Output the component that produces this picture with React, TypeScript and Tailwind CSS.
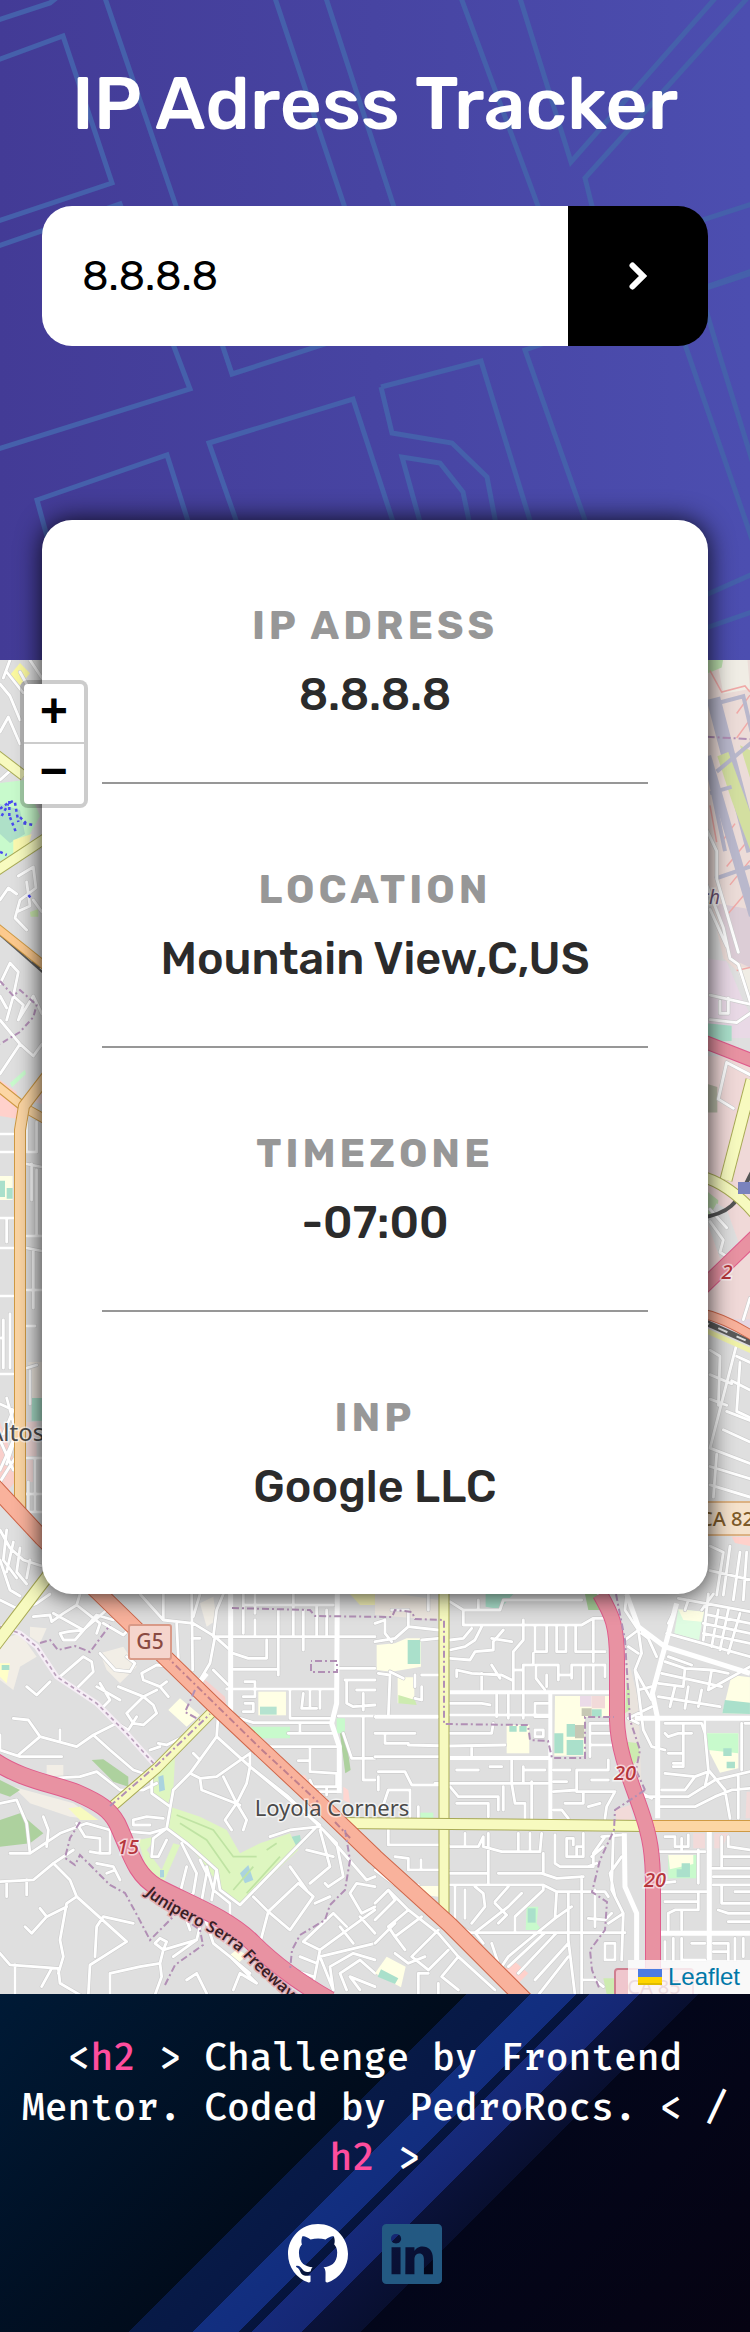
import { useState } from "react";
import { BsGithub, BsLinkedin } from "react-icons/bs";

const patternLines = [
  "M-5 21 L50 3 L60 -5",
  "M-5 61 L63 36 L112 183 L-5 222",
  "M-5 247 L120 204 L190 389 L-5 450",
  "M104 -5 L176 206 L232 374 L384 325 L274 -5",
  "M325 -5 L420 287 L500 262",
  "M460 -5 L538 206 L556 262",
  "M519 -5 L571 162 L718 -5",
  "M750 -5 L585 178 L592 206 L610 250 L755 203",
  "M755 270 L525 350 L592 540",
  "M755 272 L700 290 L721 360 L755 470",
  "M680 330 L755 548",
  "M381 387 L481 361 L536 540",
  "M381 387 L392 433 L452 443 L487 477 L499 540",
  "M425 540 L402 457 L440 463 L463 492 L473 540",
  "M243 540 L209 443 L353 399 L399 540",
  "M48 540 L37 500 L167 455 L194 540",
  "M755 573 L690 602",
  "M755 611 L700 630",
];

function HeaderPattern() {
  return (
    <svg
      aria-hidden="true"
      className="absolute inset-0 h-full w-full"
      viewBox="0 0 750 660"
      preserveAspectRatio="xMidYMin slice"
      fill="none"
      stroke="#4560ab"
      strokeWidth="5"
    >
      {patternLines.map((d) => (
        <path key={d} d={d} />
      ))}
    </svg>
  );
}

type Road = { d: string; w: number; fill: string; edge: string };

const mainRoads: Road[] = [
  { d: "M-10 1652 L37 1590 L60 1560", w: 11, fill: "#f7fabf", edge: "#a8aa55" },
  { d: "M107 1811 L157 1768 L213 1711", w: 9, fill: "#f7fabf", edge: "#a8aa55" },
  { d: "M444 1580 V1924", w: 9, fill: "#f7fabf", edge: "#a8aa55" },
  { d: "M340 1823 L450 1824 L645 1826", w: 10, fill: "#f7fabf", edge: "#a8aa55" },
  { d: "M645 1826 H760", w: 10, fill: "#fcd6a4", edge: "#cf9a44" },
  { d: "M-10 750 L24 776", w: 9, fill: "#f7fabf", edge: "#a8aa55" },
  { d: "M-10 875 L46 838", w: 9, fill: "#f7fabf", edge: "#a8aa55" },
  { d: "M752 1080 L726 1180", w: 11, fill: "#f7fabf", edge: "#a8aa55" },
  { d: "M700 1176 Q730 1184 756 1215", w: 10, fill: "#f7fabf", edge: "#a8aa55" },
  { d: "M-10 922 L50 970", w: 7, fill: "#fcc98d", edge: "#cf9a44" },
  { d: "M-10 1080 L25 1108 L50 1122", w: 8, fill: "#fcd6a4", edge: "#cf9a44" },
  { d: "M50 1072 L24 1106 L20 1130 V1510", w: 10, fill: "#fcd6a4", edge: "#cf9a44" },
  { d: "M-10 1482 L42 1538 L100 1594 L213 1704 L323 1807 L375 1857 L450 1925 L530 2005", w: 15, fill: "#f9b29c", edge: "#cf6649" },
  { d: "M700 1313 Q725 1318 756 1338", w: 8, fill: "#f9b29c", edge: "#cf6649" },
  { d: "M-10 1758 C20 1780 55 1784 77 1793 C100 1803 110 1810 117 1823 C130 1850 134 1874 157 1887 C187 1903 227 1917 253 1943 C277 1967 300 1983 330 2000", w: 16, fill: "#e892a2", edge: "#e05c8c" },
  { d: "M600 1594 C612 1615 617 1625 617 1660 V1720 C618 1760 640 1800 647 1830 C654 1855 653 1880 653 1920 V2000", w: 14, fill: "#e892a2", edge: "#e05c8c" },
  { d: "M700 1040 L756 1062", w: 12, fill: "#e892a2", edge: "#e05c8c" },
  { d: "M700 1290 L756 1236", w: 13, fill: "#e892a2", edge: "#e05c8c" },
];

type Area = [string, string];

/* South-west sheet, drawn on a grid three times finer than the map. */
const swAreas: Area[] = [
  ["M0 150 L60 130 L110 200 L60 230 L40 300 L0 270 Z", "#f2eee6"],
  ["M300 190 L370 170 L410 230 L360 280 L320 240 Z", "#f2eee6"],
  ["M90 110 L140 115 L120 160 L90 140 Z", "#f2eee6"],
  ["M40 590 L220 640 L290 690 L210 680 L90 640 Z", "#f2eee6"],
  ["M140 525 H190 V560 H140 Z", "#f2eee6"],
  ["M600 40 L640 20 L650 90 L620 110 Z", "#f2eee6"],
  ["M275 510 L310 508 L385 560 V590 L340 575 Z", "#add19e"],
  ["M0 690 L60 670 L130 730 L90 760 L0 770 Z", "#add19e"],
  ["M0 570 L60 600 L30 620 L0 610 Z", "#add19e"],
  ["M455 560 L525 505 L520 600 L500 650 L455 600 Z", "#def6c0"],
  ["M510 650 L600 680 L680 720 L720 790 L780 760 L870 730 L895 780 L720 945 L670 910 L620 830 L560 760 L505 715 Z", "#def6c0"],
  ["M415 750 L475 738 L440 780 L485 840 L520 760 L540 765 L490 880 L440 840 Z", "#def6c0"],
  ["M720 410 H870 V445 H760 Z", "#c8facc"],
  ["M1010 385 H1035 V430 H1010 Z", "#c8facc"],
  ["M1020 430 H1036 L1052 540 L1036 550 Z", "#add19e"],
  ["M775 305 H858 V376 H775 Z", "#ffffe5"],
  ["M540 325 L600 375 L560 410 L505 360 Z", "#ffffe5"],
  ["M690 1095 L712 1078 L740 1095 L715 1120 Z", "#ffffe5"],
  ["M610 265 L675 320 L680 350 L620 300 Z", "#f7cfcb"],
  ["M890 560 L915 555 L930 585 L905 590 Z", "#ffd6d1"],
  ["M1030 590 L1045 600 L1050 640 L1030 630 Z", "#ffd6d1"],
  ["M205 655 L240 650 L295 690 L240 690 Z", "#f7fabf"],
  ["M780 350 H830 V374 H780 Z", "#b5e3d0"],
  ["M0 220 H30 L20 280 L0 260 Z", "#ffffc8"],
  ["M5 225 H28 V240 H5 Z", "#aae0cb"],
  ["M1050 12 H1125 V45 H1080 Z", "#f4f2b8"],
  ["M475 560 L490 555 L495 600 L478 605 Z", "#aad3df"],
  ["M720 850 L745 825 L760 870 L735 880 Z", "#aad3df"],
  ["M480 840 H492 V862 H480 Z", "#aad3df"],
  ["M875 740 L900 735 L905 765 L890 770 Z", "#aae0cb"],
];

const swRoads = [
  "M0 30 L60 60 L110 40 L150 12 M100 80 L150 75 L155 95 L190 70 L230 45 L240 12",
  "M160 70 L250 120 L205 125 L180 130 L190 150 L225 150 L290 75 L340 90",
  "M230 45 L300 100 L290 130 M250 120 L320 60 M310 100 L370 135 L385 120",
  "M180 260 L250 200 L275 215 L280 245 L235 290 M80 290 L110 315 L150 275",
  "M300 190 L345 240 L390 245 L405 220 L380 200 M430 270 L425 250 L470 225 L515 230",
  "M430 270 L480 290 L500 275 M480 290 L505 320 M355 290 L430 320 L380 370 L400 400 L430 405 L470 370 L460 345 L430 320 L470 300",
  "M300 280 L330 330 L310 350 M290 290 L360 330",
  "M420 12 L490 90 L580 100 L645 140 L630 220 L600 270 M490 12 V90 M530 100 L535 205 M575 12 L578 240 M600 12 L580 80",
  "M640 140 L650 60 L670 12 M576 145 H600 M645 140 H1125 M645 140 L690 180",
  "M730 12 V130 M765 12 V70 M765 90 V140 M800 150 V205 M835 60 V255 M880 12 V140 M910 60 V180 M950 50 V140 M980 60 V140 M700 238 H835 M745 205 H800 M700 190 L745 205 M730 45 H1000",
  "M680 297 H1010 M640 240 L685 285 M735 275 H765 V320 H730 M735 340 H760 V365 H730 M870 297 V385 H990 M905 355 H950 M930 300 V355 M960 300 V355 M910 310 L905 355",
  "M1015 235 H1125 M1035 270 H1125 M1040 270 V340 L1060 350 L1125 345 M1070 300 H1125 M1090 310 V360 M1015 378 H1125 M1090 378 V570 H1125 M1030 430 L1055 505 H1125",
  "M720 385 L760 398 H995 M865 430 H1005 M810 470 H1010 M930 475 V545 L1010 550 M895 512 H930 M900 400 V428",
  "M945 590 H1020 M960 605 H1020 M980 590 V615 M945 605 L930 570 M1010 550 V590",
  "M0 435 V480 L60 500 H185 M55 495 L120 440 L230 470 L280 435 L330 480 L400 540 L460 560 M40 385 L85 390 L120 440 M180 450 V420 M280 435 L350 400 L385 420 L410 380",
  "M150 565 L240 560 L290 545 L360 600 L430 600 M430 600 L470 580 M475 460 L500 465 L550 440 M450 480 L480 470",
  "M655 370 L650 440 L570 550 L520 600 L500 715 L450 730 L330 720 L260 700 L180 730 L90 790 L30 790",
  "M650 440 L750 530 L865 620 L960 710 L870 720 L810 740 M570 550 L600 565 L650 560 L750 490 V530 L740 580 L710 640 L740 690 L730 720",
  "M750 530 L960 705 M600 565 L605 600 L720 645 M670 560 L710 640 M710 640 L675 690 L695 720 M580 490 L600 510 M455 560 V610 L510 650",
  "M500 715 L560 760 L650 840 L660 900 L720 945 L950 710 M400 690 L440 680 L490 685 M400 690 V705 H450 M500 715 L460 745 L455 800 L475 800 L500 750",
  "M545 760 L590 850 L580 910 L550 930 M560 830 L540 910 M600 810 L620 850 L600 960 M620 830 L640 900 L690 940 L690 975 M650 840 L635 930",
  "M0 640 L50 630 L80 700 L90 790 M130 680 L145 720 L140 770 M230 700 L255 740 L300 745 V790 L270 785 M330 720 V790 H300 M290 820 L340 830 L360 870 M320 850 L345 840",
  "M0 875 L100 870 L160 820 L220 780 M20 880 V920 M80 870 V915 M160 820 L210 870 L230 920 L380 1055 L270 1125 L265 1215 M230 920 L200 940 L180 1050 L190 1100 L175 1150",
  "M120 955 L140 980 L95 1030 L75 1010 M140 980 L200 950 M310 980 L290 1010 L285 1100 M310 980 L400 1000 M0 1090 L30 1125 L175 1135 L180 1180 L240 1215 M155 1135 L125 1190 M45 1125 V1215",
  "M330 1215 V1150 L420 1130 L480 1120 L490 1080 L465 1060 L480 1045 L500 1055 L490 1080 L590 1050 L600 1010 M480 1120 L485 1160 L465 1215 M590 1050 L520 1100",
  "M610 970 L640 1060 L690 1100 L770 1180 L720 1150 L700 1200 M540 930 L570 1020 M560 1170 L590 1150 L620 1210 M690 1100 L750 1150",
  "M760 920 L805 965 L780 1060 M805 965 L870 1020 L940 920 L895 880 L805 965 M960 710 L1010 760 L1030 860 L985 890 L975 880 M960 720 L990 830 L930 880 M920 780 L1000 800 M870 830 L920 900 M945 940 L990 920",
  "M970 720 L1100 870 L1125 860 M1050 910 L1070 880 L1125 890 M1050 910 L1085 970 L1125 950 M910 1055 L960 1080 L1125 960 M910 1055 L1000 970 L1040 1010 M960 1080 L940 1180 M1000 1200 L960 1100 L1125 1060",
  "M1000 1200 L990 1130 L1060 1090 L1125 1110 M1040 1200 L1020 1150 L1080 1110 L1125 1150 M1080 1200 L1050 1160 L1125 1190 M1020 1010 L1060 1060 M1080 980 L1125 1030 M880 1140 L940 1160 M900 1100 L950 1120",
];

/* Unpaved lane that crosses the south-west sheet. */
const lane = "M0 110 L60 130 L110 170 L170 260 L290 340 L380 430 L465 525";

const seAreas: Area[] = [
  ["M0 12 L70 12 L190 30 L190 90 L0 75 Z", "#eee8e0"],
  ["M5 165 L60 160 L95 145 H138 V230 L50 245 L5 240 Z", "#ffffe5"],
  ["M98 150 H136 V222 H98 Z", "#aae0cb"],
  ["M68 262 H118 V325 L68 340 Z", "#ffffe5"],
  ["M70 315 L120 330 L125 345 L70 340 Z", "#cdebb0"],
  ["M332 12 H415 L375 58 L332 50 Z", "#aae0cb"],
  ["M630 12 H665 L690 60 H640 Z", "#a9cf9a"],
  ["M540 318 H705 V380 H630 V497 H538 Z", "#ffffe5"],
  ["M615 318 H650 V350 H615 Z", "#ebdbe8"],
  ["M650 318 H690 V355 H650 Z", "#f2dad9"],
  ["M538 430 H565 V490 H538 Z M575 402 H600 V440 H575 Z M575 450 H625 V495 H575 Z M650 358 H680 V380 H650 Z", "#aae0cb"],
  ["M600 405 H628 V445 H600 Z M620 355 H650 V378 H620 Z", "#c6c7b4"],
  ["M395 405 H463 V490 H395 Z", "#ffffe5"],
  ["M403 408 H425 V425 H403 Z M433 408 H455 V425 H433 Z", "#aae0cb"],
  ["M910 58 L987 65 L972 150 L898 130 Z", "#dffce2"],
  ["M910 58 L987 65 L980 95 L925 90 Z", "#ffffe5"],
  ["M1070 255 L1125 262 V372 L1042 370 Z", "#ffffe5"],
  ["M1050 330 L1125 338 V372 L1042 370 Z", "#aae0cb"],
  ["M995 430 H1090 V535 L1035 548 L1005 490 Z", "#ffffe5"],
  ["M995 430 H1090 V490 L1000 480 Z", "#c8facc"],
  ["M1045 475 H1070 V498 H1045 Z M1055 515 H1080 V535 H1055 Z", "#aae0cb"],
  ["M750 170 L790 330 L800 600 L830 690 L790 690 L740 500 Z", "#e9e3dd"],
  ["M755 455 L790 460 L795 500 L770 530 Z", "#cdebb0"],
  ["M755 270 L765 300 V360 L750 370 Z", "#cdebb0"],
  ["M880 795 H968 V865 H880 Z", "#c8facc"],
  ["M880 795 H955 V822 L885 838 Z", "#ffffe5"],
  ["M905 838 H945 V862 H905 Z M920 820 H945 V838 H920 Z", "#aae0cb"],
  ["M720 660 L765 645 L775 690 L725 695 Z", "#f2dad9"],
  ["M955 730 H990 V775 H955 Z M1018 730 H1062 L1040 775 H1018 Z M1115 605 H1125 V685 H1112 Z", "#f2dad9"],
  ["M455 950 H490 L485 1000 L500 1020 H452 Z", "#c8facc"],
  ["M458 955 H482 V998 H458 Z", "#aae0cb"],
  ["M122 888 H190 V920 L150 915 Z", "#ffffe5"],
  ["M35 1100 L92 1130 L78 1192 L0 1150 Z", "#ffffe5"],
  ["M18 1138 L70 1165 L60 1182 L8 1160 Z", "#aae0cb"],
  ["M385 1140 L420 1115 L460 1150 L430 1180 Z", "#ffd1cb"],
  ["M130 668 H175 V688 H130 Z", "#c8facc"],
  ["M685 1165 H718 V1212 H695 Z", "#cdebb0"],
];

const seRoads = [
  "M225 35 L265 60 V105 H620 L655 85 H700 M265 60 H375 L385 30 H620 M310 30 V60 M445 90 V150 L415 185 M480 105 V185 H515 V105 M545 105 V185 H573 V105 M602 105 V185 H690 M655 85 V215",
  "M225 205 L285 210 L300 185 L355 180 V155 M225 150 L265 145 L290 115 M225 180 L270 170 L300 150 L320 110 M355 155 L385 120 M350 145 L410 155 M415 185 V300",
  "M415 240 H445 M445 225 V300 M445 225 H475 V190 M483 225 H550 V255 H585 M483 225 V265 L510 300 M515 255 V290 M550 255 V270 M590 225 H690 M590 225 V265 M625 225 V300 M655 225 V300 M690 225 V260",
  "M245 260 V240 L290 250 L380 255 L410 270 M320 250 V300 M350 225 L375 265",
  "M225 340 H320 L345 345 M365 310 V380 M400 310 V385 M445 310 V385 M225 375 H525 M480 340 H520 M480 340 V380 H520 M480 420 H505 V440 H480 Z M225 430 H350 L355 400",
  "M100 465 L225 468 L390 465 M0 380 H190 M0 430 H120 M0 500 H190 M10 545 H90 L110 585 H190 M30 430 V460 H100 M10 250 L45 255 L40 380 M45 245 L85 265 M120 255 V290 M140 290 V330 L120 325 M30 90 V130 L50 155",
  "M0 155 L60 145 L100 110 L190 120 M50 60 H100 V110 M140 150 L190 145 M140 255 H190 M0 100 L30 90 M160 12 V60",
  "M245 540 H310 M180 580 H520 M410 510 V580 M345 530 H380 M445 530 V580 M450 540 H510 M470 575 V690 M290 475 V500 M225 590 L250 620 H370 V660 M245 640 H340 V680 M410 580 L420 640 H450 V690 M385 590 V660",
  "M535 540 H585 M605 540 H700 V510 M605 540 V600 L535 605 M605 605 H720 M625 605 V640 H570 M650 570 H700 M640 650 L675 640 M535 660 H560 L580 685 M720 605 L695 650 L690 685 M535 575 H575 M645 400 V500 M645 400 H705 M650 430 H705 M650 465 H710",
  "M0 660 H20 L40 600 H105 V680 M10 600 V560 M130 650 V690",
  "M40 720 V765 H220 M100 805 V840 H220 M100 805 L60 800 M138 810 V840 M225 770 H310 L325 740 V770 L380 785 H495 L500 730 M225 850 H340 M340 730 V880 M370 850 H500 L545 865 L625 860 M505 790 V850",
  "M540 735 V820 L555 830 H655 V790 L690 740 M575 745 H595 V765 M575 745 V800 H625 V730 M605 795 V770 H625 M640 830 L665 820 M685 770 L650 800",
  "M270 730 V765 M430 730 V785 M465 730 V785 M225 885 H505 L545 905 H690 L700 920 M505 885 V900 L420 980 V1025 M240 885 V1000 L285 1028 H750 M270 900 V985 M300 890 L325 910 L330 950 L290 1000",
  "M300 1028 L400 950 L440 910 M360 940 L395 975 L370 1000 M400 890 L360 935 M545 905 L540 985 L590 950 M580 905 V1050 L600 1215 M620 860 V1215 M660 900 V1010 M540 985 L460 1050 L400 1100 L360 1160",
  "M510 1028 L400 1130 M545 1028 L430 1150 M580 1060 L480 1170 M580 1100 L490 1215 M325 1060 L300 1028 M350 1060 L370 1120 M620 1170 H660 L685 1190 M690 1060 H720 V1110 H690 Z M640 985 L690 990 L710 970",
  "M0 940 L40 900 L60 930 L0 990 M40 900 L100 960 L190 1030 L250 1100 L360 1200 M100 960 L40 1010 L60 1040 L140 980 M190 1020 L110 1100 L160 1140 L220 1080 M0 1060 L60 1000 M60 1090 L100 1120 L150 1100",
  "M160 1150 H130 V1215 M190 1180 V1215 M250 1100 L200 1160 L250 1200 M60 1040 L90 1080 M0 840 L60 885 H130",
  "M755 12 L750 60 L790 120 L800 190 L780 240 L830 330 M790 120 L750 150 M760 170 L790 190 M800 130 L820 145 L845 200 M780 240 L790 300 L805 420 L830 470 L870 480 M790 300 L830 290",
  "M910 25 L1125 65 M875 130 L1125 200 M940 30 L930 60 M980 60 L1015 12 M1000 12 L985 150 M1030 60 L1010 170 M1060 60 L1035 180 M1095 70 L1060 190 M880 100 L900 60 M985 100 L1125 130 M1000 75 L1125 100 M985 130 L1125 160",
  "M870 215 L930 235 L925 290 L850 280 M860 250 L1040 290 M880 200 L950 225 M930 235 L1010 240 L1000 300 L1125 230 M850 320 L1035 350 M900 290 L885 350 M940 290 L930 355 M980 300 L970 350 M1010 240 L1060 250",
  "M830 350 L760 385 L790 400 M870 400 H980 L990 430 L1000 540 L1050 600 L1065 685 M870 430 L880 440 L910 430 H950 M925 400 V530 H895 M880 490 H920 M895 520 H925 M870 550 L960 560 L1000 545 L990 590 M850 620 H940 L1020 570 L1125 545",
  "M850 650 H960 L1020 620 L1070 600 L1125 595 M810 620 H850 M960 560 L930 600 L860 600 M990 390 V430 M1100 400 V540 M1110 400 H1125 M780 600 L830 625 M1090 560 V685",
  "M870 740 H900 V770 H940 V735 M855 785 H990 M920 745 V780 M970 780 V880 M860 905 H1000 M870 935 H970 V905 M880 970 L900 960 H970 V935 M880 970 V1020 M920 960 V1020 M850 880 L900 875 M1060 740 V770 L1125 780",
  "M1015 885 H1125 M1040 885 V940 H1125 M1015 860 H1125 M1030 960 L1060 970 H1125 M1060 995 H1125 M1080 905 H1125 M1010 835 H1125 M1040 800 H1125 M1040 740 V830",
  "M870 1055 V1110 M895 1045 V1110 M920 1045 V1110 H990 M950 1060 H990 M1015 1060 H1060 V1110 M1080 1045 V1110 M1105 1045 V1100 M1015 1085 H1060",
  "M715 730 L710 900 L745 970 L740 1110 M740 800 L705 850 L720 920 M680 740 L745 735 M745 970 L700 1000",
];

const boundaries = [
  "M40 1643 L50 1640 L58 1650 L75 1646 L90 1652 L110 1625",
  "M232 1608 L310 1610 L315 1616 L392 1617 L395 1610 L412 1612 L415 1619 L444 1620 V1724 L528 1725 L530 1740 L548 1741 L552 1758 H585 V1717 H614",
  "M195 1690 L185 1712 L200 1720",
  "M80 1822 L70 1838 L65 1858 L75 1865 L80 1855 L110 1885 L125 1893 L137 1915 L150 1940 L175 1915",
  "M165 1985 L175 1965 L203 1945 L200 1930 L175 1912",
  "M345 1830 L350 1860 L345 1890 L330 1905 L325 1920 L300 1935 L292 1950 L290 1970",
  "M645 1790 L615 1810 L614 1830 L600 1860 L592 1892 L607 1902 L605 1930 L590 1950 L592 1970 L600 1990",
  "M616 1594 L625 1640 L630 1720 L640 1750 L636 1770 L645 1790",
  "M311 1664 V1672 H337 V1661 H311",
];

const westAreas: Area[] = [
  ["M30 25 L60 5 L90 22 L60 42 Z", "#fbf9a0"],
  ["M0 205 L75 200 L120 260 L60 320 L0 335 Z", "#c8facc"],
  ["M0 240 L60 250 L75 290 L30 305 L0 290 Z", "#aee0c8"],
  ["M40 300 L95 290 L80 320 L40 330 Z", "#fbf9b0"],
  ["M0 700 L50 720 L55 765 L0 760 Z", "#ffd1cb"],
  ["M90 720 L126 690 V740 L90 735 Z", "#f2dad9"],
  ["M0 860 H38 V900 H0 Z", "#ffffe5"],
  ["M0 868 H15 V895 H0 Z M20 880 H38 V898 H20 Z", "#aae0cb"],
  ["M85 1170 H126 V1240 H85 Z", "#eee8e0"],
  ["M95 1230 H126 V1268 H95 Z", "#aae0cb"],
  ["M0 1270 L45 1340 V1370 L0 1400 Z", "#f9cfcb"],
  ["M80 1270 H110 V1370 H80 Z", "#f2dad9"],
  ["M90 420 L115 415 V428 H92 Z", "#cdebb0"],
  ["M30 705 L75 683 L78 690 L36 712 Z", "#c8facc"],
];

const westRoads = [
  "M0 40 L30 60 L60 100 M20 20 L70 55 M0 120 L25 95 L60 140 M60 20 L100 60 M90 0 L126 30 M30 0 L10 30 M0 200 L40 180",
  "M0 400 L25 380 L50 390 M55 360 L100 345 L108 380 L60 400 L45 430 L80 450 M80 370 L90 410 L50 420 M60 330 L126 310 M100 400 L126 420",
  "M0 540 L30 505 L55 520 L40 560 L20 600 M40 560 L70 575 L55 600 L100 560 L126 590 M0 600 L60 640 L100 660 L126 640 M60 640 L0 690 M0 560 L20 580",
  "M0 790 H40 M0 820 H45 M0 930 H45 M20 930 V970 M0 980 H45 M0 1060 H40 M10 1100 V1180 M0 1190 H40 M30 1090 V1180 M0 1130 H10",
  "M80 770 V820 H110 V770 M80 840 L126 845 M95 840 V900 M110 850 V960 M80 960 H126 M80 980 L126 985 M100 985 V1080 M80 1050 L126 1050 M80 1110 H105 M80 1180 L110 1175 M90 1185 V1240 M80 1330 H126 M85 1370 V1420 H126 M105 1330 V1420 M80 1390 H126",
  "M0 1240 L40 1250 L10 1290 M20 1230 L50 1290 L20 1340 M0 1300 L40 1350 M0 1350 L40 1300 M0 1370 L45 1330",
  "M0 1450 L30 1480 L70 1500 L126 1510 M20 1450 L10 1500 L50 1530 M40 1470 L20 1520 M60 1480 L50 1520 L80 1540 M90 1500 L80 1530 M0 1500 L30 1550 L60 1560",
];

const eastAreas: Area[] = [
  ["M140 30 H270 V560 L190 520 L140 400 Z", "#ecdcd8"],
  ["M170 30 H262 L270 80 L190 88 Z", "#f0ede5"],
  ["M140 30 H190 L185 45 L140 55 Z", "#bfe3b0"],
  ["M170 430 L270 440 V535 L210 520 Z", "#dccdd6"],
  ["M230 535 H270 V590 L255 575 Z", "#f0ede5"],
  ["M140 520 L200 525 L250 590 L270 610 V650 H140 Z", "#e9d9e6"],
  ["M140 626 L215 630 V655 L140 656 Z", "#aae0cb"],
  ["M140 680 H270 V1110 H140 Z", "#f0d9d8"],
  ["M140 725 L172 730 V772 H140 Z", "#b9bba8"],
  ["M140 900 L175 915 L170 945 L140 940 Z", "#bcd9ac"],
  ["M170 920 L200 930 L240 990 L180 1010 L140 950 Z", "#dfdfdf"],
  ["M140 1110 H270 V1130 L140 1125 Z", "#e6d6e3"],
  ["M215 1465 H270 V1480 L225 1475 Z", "#ffd1cb"],
];

const airfieldGrass: Area[] = [
  ["M172 190 L205 183 L270 280 V342 L215 262 Z", "#d3dfa0"],
  ["M240 172 L270 180 V225 Z", "#d3dfa0"],
];

const eastRoads = [
  "M140 310 L170 345 V390 L235 510 M140 400 L190 470 L210 520 L235 530 L270 590 M150 440 L200 500 M150 580 L270 595 M180 590 V610 H205 V585 M150 620 L230 625 L270 610",
  "M200 690 L175 750 L220 765 M200 690 L270 710 M150 950 L190 980 L180 1000 L210 1010 M270 1075 L250 1110 M150 930 L200 960",
  "M230 1150 L150 1320 M150 1160 L180 1170 L175 1250 M150 1200 L215 1215 M150 1240 L200 1250 M230 1170 L270 1180 M215 1210 L270 1225 M240 1180 L230 1260 L270 1270 M200 1260 L270 1275 M190 1290 L270 1310 M150 1320 L270 1345",
  "M150 1350 L270 1370 M170 1330 L160 1400 M150 1380 L270 1400 M150 1480 L190 1490 L170 1560 M210 1480 L190 1560 M240 1490 L220 1568 M260 1490 L250 1568 M150 1520 L270 1535",
];

function Areas({ items }: { items: Area[] }) {
  return (
    <>
      {items.map(([d, fill]) => (
        <path key={d} d={d} fill={fill} />
      ))}
    </>
  );
}

function MinorRoads({ items }: { items: string[] }) {
  const d = items.join(" ");
  return (
    <g fill="none" strokeLinejoin="round" strokeLinecap="round">
      <path d={d} stroke="#cdcdcd" strokeWidth="4" vectorEffect="non-scaling-stroke" />
      <path d={d} stroke="#fff" strokeWidth="2.8" vectorEffect="non-scaling-stroke" />
    </g>
  );
}

function StreetMap() {
  return (
    <svg
      role="img"
      aria-label="Map of Mountain View"
      className="absolute inset-0 h-full w-full"
      viewBox="0 660 750 1334"
      preserveAspectRatio="xMidYMin slice"
    >
      <rect x="-500" y="660" width="1750" height="1334" fill="#dfdfdf" />

      {/* West strip */}
      <g transform="translate(0 660) scale(0.3333 0.6)">
        <Areas items={westAreas} />
        <MinorRoads items={westRoads} />
        <path
          d="M0 248 L20 240 L40 235 M28 235 V262 M45 238 L55 270 M60 262 L78 272 M70 272 L100 275 M30 262 L50 290 M0 320 L20 325 M85 392 L95 398 M5 260 L25 240"
          fill="none"
          stroke="#4a4af0"
          strokeWidth="2.5"
          strokeDasharray="3 3"
          vectorEffect="non-scaling-stroke"
        />
        <path
          d="M0 535 L40 560 L60 550 L110 575 L100 595 L60 620 L0 640"
          fill="none"
          stroke="#b18fb5"
          strokeWidth="2"
          strokeDasharray="6 3 2 3"
          vectorEffect="non-scaling-stroke"
        />
      </g>

      {/* East strip */}
      <g transform="translate(660 640) scale(0.3333 0.6122)">
        <Areas items={eastAreas} />
        <path
          d="M150 50 L185 85 L255 75 L270 85 M230 120 L270 90 M230 160 L270 130 M185 330 L225 300 M200 370 L260 330 M210 400 L270 360 M200 450 L270 405 M230 540 L270 535 M150 270 L170 330"
          fill="none"
          stroke="#f0aaa8"
          strokeWidth="1.5"
          vectorEffect="non-scaling-stroke"
        />
        <g fill="none" stroke="#b9b8cc">
          <path d="M160 95 L280 345" strokeWidth="14" vectorEffect="non-scaling-stroke" />
          <path d="M140 190 L280 450" strokeWidth="9" vectorEffect="non-scaling-stroke" />
        </g>
        <Areas items={airfieldGrass} />
        <path
          d="M160 105 L250 92 L275 150 M140 200 L195 345 M165 390 L270 370 M170 215 L280 165 M150 250 L215 240"
          fill="none"
          stroke="#b9b8cc"
          strokeWidth="4"
          vectorEffect="non-scaling-stroke"
        />
        <path
          d="M140 158 L270 162"
          stroke="#b18fb5"
          strokeWidth="2"
          strokeDasharray="8 3 2 3"
          vectorEffect="non-scaling-stroke"
        />
        <MinorRoads items={eastRoads} />
      </g>

      {/* South-west */}
      <g transform="translate(0 1590) scale(0.3333)">
        <Areas items={swAreas} />
        <path
          d="M530 675 L640 720 L700 800 L770 800 M540 700 L620 750 L690 850 M700 900 L760 830 M800 780 L830 760 M740 910 L840 800"
          fill="none"
          stroke="#bfe3a3"
          strokeWidth="5"
        />
        <MinorRoads items={swRoads} />
        <g fill="none" stroke="#fff">
          <path d="M692 12 V365 M1012 12 L1010 340 L995 400 L1018 470 V610 M600 275 L620 250" strokeWidth="15" />
          <path d={lane} stroke="#f6eef6" strokeWidth="16" />
          <path d={lane} stroke="#b9a0bb" strokeWidth="5" strokeDasharray="12 10" />
        </g>
      </g>

      {/* South-east */}
      <g transform="translate(375 1590) scale(0.3333)">
        <Areas items={seAreas} />
        <MinorRoads items={seRoads} />
        <g fill="none" stroke="#fff">
          <path d="M225 307 H705 M225 504 H520 M526 307 V690 M0 380 H190" strokeWidth="12" />
          <path
            d="M755 12 L790 110 L870 170 L1125 250 M905 40 L832 310 L848 385 V685 M780 385 H1125 M1003 725 V1110 M858 1030 H1125 M748 730 L750 890 L785 970 V1110"
            strokeWidth="15"
          />
        </g>
      </g>

      {/* Rail lines */}
      <g fill="none">
        <path d="M-5 928 L50 976" stroke="#5a5a5a" strokeWidth="6" />
        <path d="M-5 928 L50 976" stroke="#ddd" strokeWidth="2" strokeDasharray="10 10" />
        <path d="M700 1218 C740 1212 738 1195 756 1165" stroke="#555" strokeWidth="4" />
        <path d="M700 1328 L756 1353" stroke="#f0f2a8" strokeWidth="5" />
        <path d="M700 1320 L756 1345" stroke="#5a5a5a" strokeWidth="6" />
        <path d="M700 1320 L756 1345" stroke="#ddd" strokeWidth="2" strokeDasharray="10 10" />
      </g>

      {/* Main roads */}
      {mainRoads.map((r) => (
        <g key={r.d} fill="none" strokeLinejoin="round">
          <path d={r.d} stroke={r.edge} strokeWidth={r.w + 2} />
          <path d={r.d} stroke={r.fill} strokeWidth={r.w} />
        </g>
      ))}
      <rect x="738" y="1182" width="14" height="12" fill="#7b83bd" />
      <g fill="none" stroke="#b18fb5" strokeWidth="2" strokeDasharray="7 3 2 3">
        {boundaries.map((d) => (
          <path key={d} d={d} />
        ))}
        <path d="M165 1655 L260 1748 L318 1802 M335 1822 L352 1840" stroke="#c07f8c" />
        <path d="M110 1806 L157 1765 L210 1714" />
      </g>

      {/* Road shields */}
      <rect x="129" y="1625" width="42" height="34" rx="2" fill="#f5d5cd" stroke="#d99a88" strokeWidth="2" />
      <rect x="690" y="1502" width="80" height="33" rx="2" fill="#f5e2cc" stroke="#dcb283" strokeWidth="2" />
      <rect x="615" y="1969" width="78" height="34" rx="3" fill="#efc6cd" stroke="#cf7f90" strokeWidth="2" />

      {/* Labels */}
      <g
        fontFamily="'Noto Sans', 'Open Sans', sans-serif"
        stroke="#fff"
        strokeOpacity="0.6"
        strokeWidth="3"
        paintOrder="stroke"
        fill="#4a4a4a"
      >
        <text x="150" y="1649" fontSize="21" textAnchor="middle" fill="#8a4a42" stroke="none" fontWeight="500">
          G5
        </text>
        <text x="700" y="1526" fontSize="20" fill="#7d5a2a" stroke="none" fontWeight="500">
          CA 82
        </text>
        <text x="654" y="1994" fontSize="20" textAnchor="middle" fill="#a04458" stroke="none">
          CA 85
        </text>
        <text x="332" y="1816" fontSize="22" textAnchor="middle">
          Loyola Corners
        </text>
        <text x="-12" y="1441" fontSize="24">
          Altos
        </text>
        <text x="691" y="904" fontSize="19" fontStyle="italic" fill="#6f5577">
          ech
        </text>
        <g fontSize="20" fontStyle="italic" fontWeight="500" fill="#b5363c" textAnchor="middle">
          <text x="128" y="1854">15</text>
          <text x="625" y="1780">20</text>
          <text x="655" y="1887">20</text>
          <text x="727" y="1279">2</text>
        </g>
        <path
          id="freeway"
          d="M145 1894 C170 1918 222 1930 248 1962 C264 1978 276 1986 300 2010"
          stroke="none"
          fill="none"
        />
        <text fontSize="16" fill="#3b1f26" stroke="#e892a2" fontWeight="600">
          <textPath href="#freeway">Junipero Serra Freeway</textPath>
        </text>
      </g>
    </svg>
  );
}

const details = [
  { label: "IP ADRESS", value: "8.8.8.8" },
  { label: "LOCATION", value: "Mountain View,C,US" },
  { label: "TIMEZONE", value: "-07:00" },
  { label: "INP", value: "Google LLC" },
];

function ZoomControl() {
  return (
    <div className="absolute left-5 top-5 z-20 flex flex-col overflow-hidden rounded-lg border-4 border-black/20 bg-white bg-clip-padding font-['Liberation_Mono',monospace] text-[48px] font-bold leading-[60px] text-black">
      <button type="button" aria-label="Zoom in" className="h-[60px] w-[60px] border-b-2 border-[#ccc]">
        +
      </button>
      <button type="button" aria-label="Zoom out" className="h-[60px] w-[60px]">
        −
      </button>
    </div>
  );
}

export default function App() {
  const [ip, setIp] = useState("8.8.8.8");
  return (
    <div className="flex min-h-screen flex-col font-['Rubik','Inter',sans-serif]">
      <header className="relative bg-linear-to-r from-[#433b96] via-[#4744a2] to-[#4c4eb0] px-[42px] pb-[314px] pt-[62px]">
        <HeaderPattern />
        <div className="relative">
          <h1 className="text-center text-[73px] font-medium leading-[84px] text-white">IP Adress Tracker</h1>
          <form
            className="mt-[60px] flex h-[140px] overflow-hidden rounded-[30px]"
            onSubmit={(e) => e.preventDefault()}
          >
            <input
              aria-label="IP address"
              value={ip}
              onChange={(e) => setIp(e.target.value)}
              className="min-w-0 flex-1 bg-white px-10 text-[42px] text-black outline-none"
            />
            <button
              type="submit"
              aria-label="Search"
              className="flex w-[140px] shrink-0 items-center justify-center bg-black"
            >
              <svg width="18" height="28" viewBox="0 0 18 28" fill="none" stroke="#fff" strokeWidth="6" strokeLinecap="round">
                <path d="M3.5 3.5 L14 14 L3.5 24.5" />
              </svg>
            </button>
          </form>
        </div>
      </header>

      <main className="relative px-[42px] pb-[400px]">
        <StreetMap />
        <ZoomControl />
        <dl className="relative z-10 -mt-[140px] rounded-[30px] bg-white px-[60px] pb-5 text-center shadow-[0_0_26px_rgba(0,0,0,0.85)]">
          {details.map((d) => (
            <div key={d.label} className="border-b-2 border-[#979797] pb-[60px] pt-[82px] last:border-b-0">
              <dt className="text-[40px] font-bold leading-[48px] tracking-[4px] text-[#979797]">{d.label}</dt>
              <dd className="mt-[18px] text-[45px] font-medium leading-[54px] text-[#2b2b2b]">{d.value}</dd>
            </div>
          ))}
        </dl>
        <div className="absolute bottom-0 right-0 flex h-[34px] items-center gap-[6px] bg-white/80 px-[10px] font-['Liberation_Sans',Arial,sans-serif] text-[24px] leading-none text-[#0078a8]">
          <svg aria-hidden="true" width="24" height="16" viewBox="0 0 12 8">
            <path fill="#4C7BE1" d="M0 0h12v4H0z" />
            <path fill="#FFD500" d="M0 4h12v3H0z" />
            <path fill="#E0BC00" d="M0 7h12v1H0z" />
          </svg>
          <a href="https://leafletjs.com">Leaflet</a>
        </div>
      </main>

      <footer className="flex flex-col items-center bg-[linear-gradient(135deg,#001a36_0px,#010c1c_330px,#071a47_330px,#071845_375px,#122f80_375px,#122d7e_408px,#06153e_408px,#06143c_417px,#162a7a_417px,#152774_452px,#0a1239_452px,#080f30_494px,#03061a_494px,#060312_770px)] px-2 pb-12 pt-10 text-center">
        <h2 className="font-['Fira_Code','DejaVu_Sans_Mono',monospace] text-[37px] font-medium leading-[50px] text-white">
          &lt;<span className="text-[#ff4d9e]">h2</span> &gt; Challenge by Frontend Mentor. Coded by PedroRocs. &lt; /{" "}
          <span className="text-[#ff4d9e]">h2</span> &gt;
        </h2>
        <div className="mt-10 flex gap-[34px] pr-5">
          <a href="https://github.com" aria-label="GitHub" className="text-white">
            <BsGithub size={60} />
          </a>
          <a href="https://www.linkedin.com" aria-label="LinkedIn" className="text-[#235982]">
            <BsLinkedin size={60} />
          </a>
        </div>
      </footer>
    </div>
  );
}
